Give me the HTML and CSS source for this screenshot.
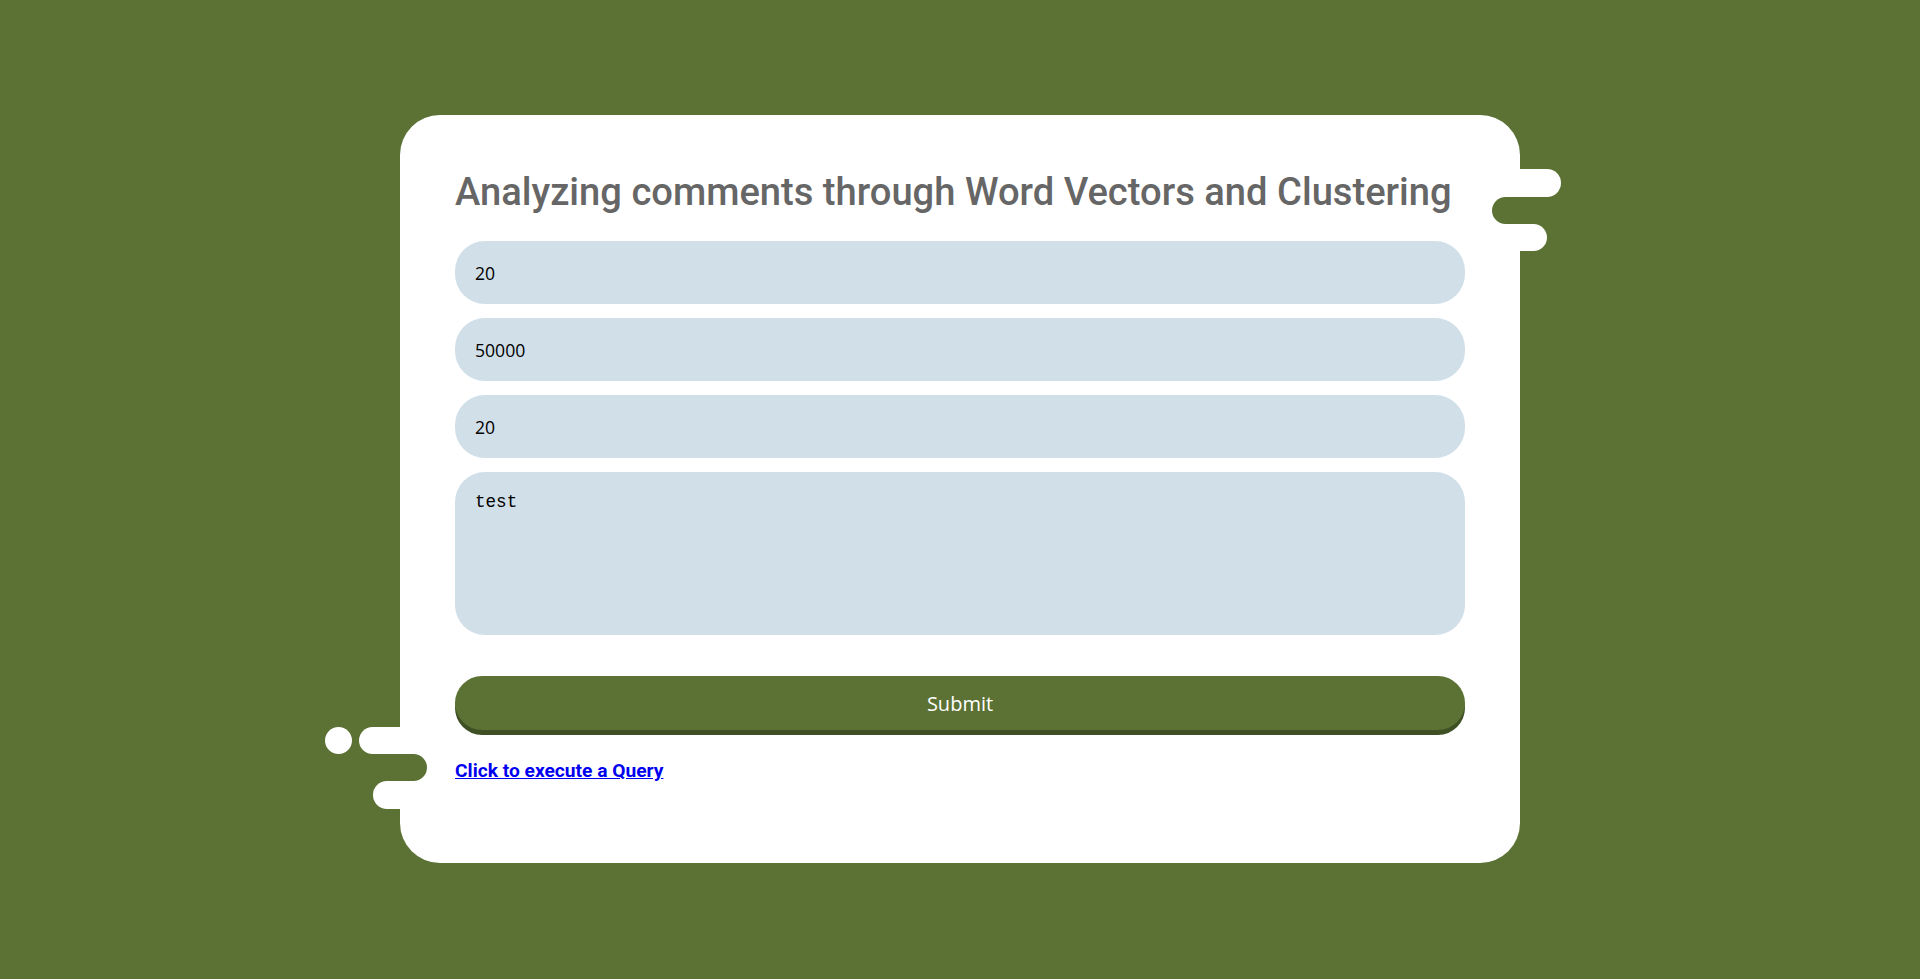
FILE: index.html
```html
<!DOCTYPE html>
<html lang="en">
<head>
<meta charset="utf-8">
<title>Analyzing comments</title>
<link rel="stylesheet" href="styles.css">
</head>
<body>
<main class="card">
  <span class="blob blob-r1"></span>
  <span class="notch notch-r"></span>
  <span class="blob blob-r2"></span>
  <span class="dot"></span>
  <span class="blob blob-l1"></span>
  <span class="notch notch-l"></span>
  <span class="blob blob-l2"></span>

  <h1 class="title">Analyzing comments through Word Vectors and Clustering</h1>
  <form class="form">
    <input class="field" type="text" value="20">
    <input class="field" type="text" value="50000">
    <input class="field" type="text" value="20">
    <textarea class="area">test</textarea>
    <button class="submit" type="button">Submit</button>
  </form>
  <h3 class="query"><a href="#">Click to execute a Query</a></h3>
</main>
</body>
</html>
```
FILE: styles.css
```css
html, body {
  margin: 0;
  padding: 0;
}
body {
  background: #5b7234;
  min-height: 100vh;
  box-sizing: border-box;
  padding-top: 115px;
  display: flex;
  align-items: flex-start;
  justify-content: center;
  font-family: "Open Sans", "Liberation Sans", sans-serif;
}
.card {
  position: relative;
  box-sizing: border-box;
  width: 1120px;
  padding: 54px 55px 81px;
  background: #fff;
  border-radius: 40px;
}
.title {
  margin: 0 0 26px;
  font-family: Roboto, "Liberation Sans", sans-serif;
  font-weight: 500;
  font-size: 38.15px;
  line-height: 46px;
  color: #666;
  white-space: nowrap;
}
.form {
  display: flex;
  flex-direction: column;
  gap: 14px;
}
.field, .area {
  box-sizing: border-box;
  width: 100%;
  border: none;
  outline: none;
  background: #d1dfe8;
  border-radius: 30px;
  color: #000;
  margin: 0;
}
.field {
  height: 63px;
  padding: 0 20px;
  font-family: "Open Sans", "Liberation Sans", sans-serif;
  font-size: 17.6px;
}
.area {
  height: 163px;
  padding: 20px;
  resize: none;
  font-family: "Liberation Mono", monospace;
  font-size: 17.6px;
  line-height: 20px;
}
.submit {
  margin-top: 27px;
  height: 54px;
  width: 100%;
  border: none;
  border-radius: 30px;
  background: #5b7234;
  box-shadow: 0 5px 0 #3f5024;
  color: #fff;
  font-family: "Open Sans", "Liberation Sans", sans-serif;
  font-size: 20px;
  cursor: pointer;
}
.query {
  margin: 30px 0 0;
  font-family: Roboto, "Liberation Sans", sans-serif;
  font-weight: 700;
  font-size: 19.2px;
  line-height: 22px;
}
.query a {
  color: #0000ee;
}

/* decorative drips around the card edges */
.blob, .notch, .dot {
  position: absolute;
  display: block;
}
.blob {
  background: #fff;
  width: 80px;
}
.notch {
  background: #5b7234;
}
.blob-r1 {
  top: 54px;
  right: -41px;
  height: 28px;
  border-radius: 14px;
}
.notch-r {
  top: 82px;
  left: 1092px;
  width: 60px;
  height: 27px;
  border-radius: 13.5px;
}
.blob-r2 {
  top: 109px;
  right: -27px;
  height: 27px;
  border-radius: 13.5px;
}
.dot {
  top: 612px;
  left: -75px;
  width: 27px;
  height: 27px;
  border-radius: 50%;
  background: #fff;
}
.blob-l1 {
  top: 612px;
  left: -41px;
  height: 27px;
  border-radius: 13.5px;
}
.notch-l {
  top: 639px;
  left: -40px;
  width: 67px;
  height: 27px;
  border-radius: 13.5px;
}
.blob-l2 {
  top: 666px;
  left: -27px;
  height: 28px;
  border-radius: 14px;
}
```
